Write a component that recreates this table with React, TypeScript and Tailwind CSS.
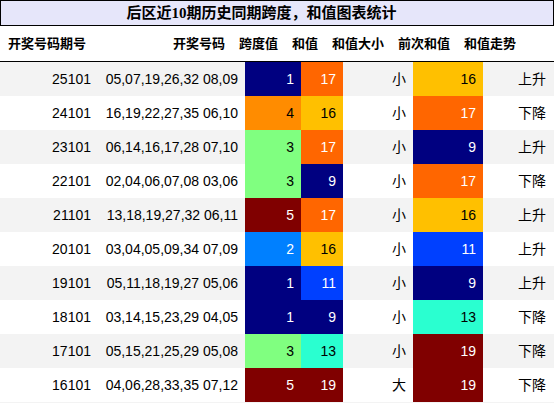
import React from "react";

const spanColor: Record<number, string> = {
  1: "bg-[#000080] text-white",
  2: "bg-[#0080ff] text-white",
  3: "bg-[#80ff80] text-black",
  4: "bg-[#ff8c00] text-black",
  5: "bg-[#800000] text-white",
};

const sumColor: Record<number, string> = {
  9: "bg-[#000080] text-white",
  11: "bg-[#0040ff] text-white",
  13: "bg-[#2affd0] text-black",
  16: "bg-[#ffc000] text-black",
  17: "bg-[#ff6600] text-white",
  19: "bg-[#800000] text-white",
};

const rows = [
  { issue: "25101", nums: "05,07,19,26,32 08,09", span: 1, sum: 17, size: "小", prev: 16, trend: "上升" },
  { issue: "24101", nums: "16,19,22,27,35 06,10", span: 4, sum: 16, size: "小", prev: 17, trend: "下降" },
  { issue: "23101", nums: "06,14,16,17,28 07,10", span: 3, sum: 17, size: "小", prev: 9, trend: "上升" },
  { issue: "22101", nums: "02,04,06,07,08 03,06", span: 3, sum: 9, size: "小", prev: 17, trend: "下降" },
  { issue: "21101", nums: "13,18,19,27,32 06,11", span: 5, sum: 17, size: "小", prev: 16, trend: "上升" },
  { issue: "20101", nums: "03,04,05,09,34 07,09", span: 2, sum: 16, size: "小", prev: 11, trend: "上升" },
  { issue: "19101", nums: "05,11,18,19,27 05,06", span: 1, sum: 11, size: "小", prev: 9, trend: "上升" },
  { issue: "18101", nums: "03,14,15,23,29 04,05", span: 1, sum: 9, size: "小", prev: 13, trend: "下降" },
  { issue: "17101", nums: "05,15,21,25,29 05,08", span: 3, sum: 13, size: "小", prev: 19, trend: "下降" },
  { issue: "16101", nums: "04,06,28,33,35 07,12", span: 5, sum: 19, size: "大", prev: 19, trend: "下降" },
];

const cell = "flex h-full items-center justify-end pr-[7px]";

export default function App() {
  return (
    <div className="w-[554px] h-[403px] bg-[#f3f3f3] font-['Liberation_Sans','Noto_Sans_CJK_SC',sans-serif] text-black">
      {/* Title */}
      <div className="flex h-[26px] items-center justify-center border border-black bg-[#e6e6fa] pr-[31px] font-['Liberation_Serif','Noto_Sans_CJK_SC',serif] text-[15px] font-bold">
        后区近10期历史同期跨度，和值图表统计
      </div>

      {/* Header */}
      <div className="flex h-[36px] items-center gap-[14px] border-b border-black bg-white pl-[8px] font-['Liberation_Serif','Noto_Sans_CJK_SC',serif] text-[13px] font-bold">
        <span className="mr-[73px]">开奖号码期号</span>
        <span>开奖号码</span>
        <span>跨度值</span>
        <span>和值</span>
        <span>和值大小</span>
        <span>前次和值</span>
        <span>和值走势</span>
      </div>

      {/* Rows */}
      {rows.map((r, i) => (
        <div
          key={r.issue}
          className={`grid h-[34px] grid-cols-[98px_147px_56px_42px_70px_70px_71px] text-[14px] ${
            i % 2 === 0 ? "bg-[#f3f3f3]" : "bg-white"
          }`}
        >
          <div className={cell}>{r.issue}</div>
          <div className={cell}>{r.nums}</div>
          <div className={`${cell} ${spanColor[r.span]}`}>{r.span}</div>
          <div className={`${cell} ${sumColor[r.sum]}`}>{r.sum}</div>
          <div className={cell}>{r.size}</div>
          <div className={`${cell} ${sumColor[r.prev]}`}>{r.prev}</div>
          <div className={`${cell} pr-[8px]`}>{r.trend}</div>
        </div>
      ))}
    </div>
  );
}
